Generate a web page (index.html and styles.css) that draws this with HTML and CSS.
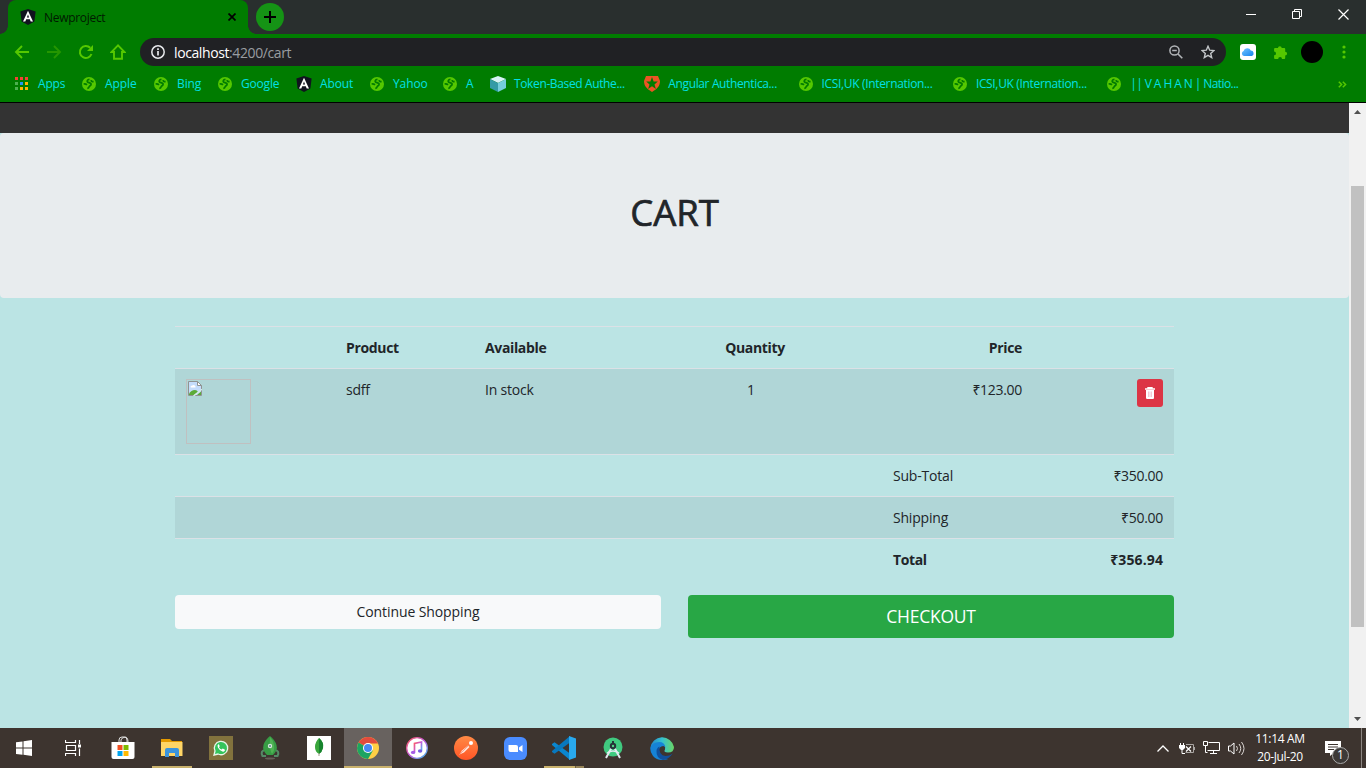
FILE: index.html
```html
<!DOCTYPE html>
<html lang="en">
<head>
<meta charset="utf-8">
<title>Newproject</title>
<link rel="stylesheet" href="styles.css">
</head>
<body>
<svg class="defs" width="0" height="0" aria-hidden="true">
  <defs>
    <symbol id="angular" viewBox="0 0 16 16"><path d="M8 0l7.6 2.6-1.2 10L8 16l-6.4-3.4-1.2-10z" fill="#11131f"/><path d="M8 1.800L3 12.600h2.300l.9-2.400h3.600l.9 2.400H13zM8 5.400l1.100 3H6.900z" fill="#fff" fill-rule="evenodd"/></symbol>
    <symbol id="globe" viewBox="0 0 14 14"><circle cx="7" cy="7" r="7" fill="#55c800"/><path d="M7.500 2.300C5 2.600 4.800 4.300 5.600 5c1 .8 2.900.6 3.500 1.900.4 1.300-1.200 1.700-1.800 2.500-.3.900-.9 1.700-2 2.100M1.600 7c1.400-.2 2.600 0 3.300 1M9.300 3c-.4 1.100.5 1.700 2.300 1.700" fill="none" stroke="#007c00" stroke-width="1.700"/></symbol>
  </defs>
</svg>
<div class="screen">
  <header class="titlebar">
    <div class="tab">
      <svg class="tab-icon" width="16" height="16"><use href="#angular"/></svg>
      <span class="tab-title">Newproject</span>
      <svg width="8" height="8" viewBox="0 0 8 8"><path d="M.5.5l7 7m0-7l-7 7" stroke="#000" stroke-width="1.700"/></svg>
    </div>
    <div class="new-tab"><svg width="12" height="12"><path d="M6 0v12M0 6h12" stroke="#000" stroke-width="2"/></svg></div>
    <div class="window-buttons">
      <svg width="10" height="10"><path d="M0 5.500h10" stroke="#fff"/></svg>
      <svg width="10" height="10"><path d="M.5 2.500h7v7h-7zM2.500 2.500v-2h7v7h-2" fill="none" stroke="#fff"/></svg>
      <svg width="11" height="11"><path d="M.5.500l10 10m0-10l-10 10" stroke="#fff" stroke-width="1.200"/></svg>
    </div>
  </header>

  <div class="toolbar">
    <nav class="nav-buttons">
      <svg width="16" height="16" viewBox="0 0 16 16"><path d="M15 8H2m6-6L2 8l6 6" fill="none" stroke="#55c800" stroke-width="1.900"/></svg>
      <svg width="16" height="16" viewBox="0 0 16 16"><path d="M1 8h13M8 2l6 6-6 6" fill="none" stroke="#259600" stroke-width="1.900"/></svg>
      <svg width="16" height="16" viewBox="0 0 16 16"><path d="M13.500 10A6 6 0 1 1 12.200 3.800" fill="none" stroke="#55c800" stroke-width="2"/><path d="M15 1v6H9z" fill="#55c800"/></svg>
      <svg width="16" height="16" viewBox="0 0 16 16"><path d="M8 1.400L1.500 8H4v6.800h8V8h2.500z" fill="none" stroke="#55c800" stroke-width="1.900"/></svg>
    </nav>
    <div class="address">
      <svg width="14" height="14" viewBox="0 0 14 14"><circle cx="7" cy="7" r="6.200" fill="none" stroke="#e8eaed" stroke-width="1.500"/><path d="M7 6v4.500M7 3.300v1.700" stroke="#e8eaed" stroke-width="1.700"/></svg>
      <span class="url"><b>localhost</b>:4200/cart</span>
      <svg class="lens" width="14" height="14" viewBox="0 0 14 14"><circle cx="5.500" cy="5.500" r="4.600" fill="none" stroke="#b2b5b8" stroke-width="1.500"/><path d="M3.200 5.500h4.600M9 9l4.300 4.300" stroke="#b2b5b8" stroke-width="1.600"/></svg>
      <svg width="14" height="14" viewBox="0 0 14 14"><path d="M7 1.300l1.700 3.900 4.200.4-3.200 2.800 1 4.200L7 10.400l-3.700 2.200 1-4.200L1.100 5.600l4.200-.4z" fill="none" stroke="#c3c6c9" stroke-width="1.400"/></svg>
    </div>
    <div class="extensions">
      <svg width="16" height="16" viewBox="0 0 16 16"><defs><linearGradient id="cloud" x2="1" y2="1"><stop stop-color="#72c5ff"/><stop offset="1" stop-color="#1683ee"/></linearGradient></defs><rect width="16" height="16" rx="3" fill="#fff"/><path d="M4 12A2.600 2.600 0 0 1 3.600 7a3.800 3.800 0 0 1 7.200-.5A2.900 2.900 0 0 1 12 12z" fill="url(#cloud)"/></svg>
      <svg width="15" height="15" viewBox="0 0 15 15"><path d="M2 3h3a1.800 1.800 0 0 1 3.700 0h2.600q.9 0 .9.900v2.800a1.900 1.900 0 0 1 0 3.800v2.600q0 .9-.9.900H9a1.900 1.900 0 0 0-3.800 0H2q-.9 0-.9-.9v-2.800a1.900 1.900 0 0 0 0-3.800V3.900Q1.100 3 2 3z" fill="#55c800"/></svg>
      <span class="avatar"></span>
      <svg width="4" height="14"><g fill="#55c800"><circle cx="2" cy="2" r="1.600"/><circle cx="2" cy="7" r="1.600"/><circle cx="2" cy="12" r="1.600"/></g></svg>
    </div>
  </div>

  <div class="bookmarks">
    <div class="mark w67"><svg class="fav" width="14" height="14" viewBox="0 0 14 14"><path d="M0 0h3v3H0zM5 0h3v3H5zM10 0h3v3h-3z" fill="#f44336"/><path d="M0 5h3v3H0zM0 10h3v3H0z" fill="#4caf50"/><path d="M5 5h3v3H5z" fill="#2196f3"/><path d="M10 5h3v3h-3zM5 10h3v3H5zM10 10h3v3h-3z" fill="#ffb300"/></svg><span class="l-apps">Apps</span></div>
    <div class="mark w72"><svg class="fav" width="14" height="14"><use href="#globe"/></svg><span>Apple</span></div>
    <div class="mark w64"><svg class="fav" width="14" height="14"><use href="#globe"/></svg><span class="l-bing">Bing</span></div>
    <div class="mark w79"><svg class="fav" width="14" height="14"><use href="#globe"/></svg><span class="l-google">Google</span></div>
    <div class="mark about"><svg class="fav wide" width="16" height="16"><use href="#angular"/></svg><span>About</span></div>
    <div class="mark w73"><svg class="fav" width="14" height="14"><use href="#globe"/></svg><span class="l-yahoo">Yahoo</span></div>
    <div class="mark w48"><svg class="fav" width="14" height="14"><use href="#globe"/></svg><span>A</span></div>
    <div class="mark w154"><svg class="fav wide" width="16" height="16" viewBox="0 0 16 16"><path d="M8 0l8 3-8 4-8-4z" fill="#d8f3f6"/><path d="M0 3l8 4v9l-8-4z" fill="#349ba6"/><path d="M16 3L8 7v9l8-4z" fill="#75cddb"/></svg><span class="l-token">Token-Based Authe...</span></div>
    <div class="mark w154"><svg class="fav wide" width="16" height="16" viewBox="0 0 16 16"><path d="M2 0h12l2 5c0 5-3 8-8 11C3 13 0 10 0 5z" fill="#eb5424"/><path d="M8 1l1.600 4.600h4.200l-3.300 2.800 1.400 4.500L8 10.200l-3.900 2.700 1.400-4.500-3.300-2.800h4.200z" fill="#007c00"/></svg><span class="l-auth">Angular Authentica...</span></div>
    <div class="mark w154"><svg class="fav" width="14" height="14"><use href="#globe"/></svg><span class="l-icsi">ICSI,UK (Internation...</span></div>
    <div class="mark w154"><svg class="fav" width="14" height="14"><use href="#globe"/></svg><span class="l-icsi">ICSI,UK (Internation...</span></div>
    <div class="mark w154"><svg class="fav" width="14" height="14"><use href="#globe"/></svg><span class="l-vahan">|| V A H A N | Natio...</span></div>
    <svg class="more" width="9" height="7"><path d="M.8.700l2.800 2.800L.8 6.300M4.800.700l2.800 2.800-2.800 2.800" fill="none" stroke="#55c800" stroke-width="1.500"/></svg>
  </div>

  <div class="viewport">
    <div class="page">
      <div class="site-bar"></div>
      <section class="hero"><h1>CART</h1></section>
      <main class="container">
        <table class="cart">
          <colgroup><col class="c-image"><col class="c-product"><col class="c-available"><col class="c-quantity"><col class="c-price"><col class="c-action"></colgroup>
          <thead><tr><th></th><th>Product</th><th>Available</th><th class="center">Quantity</th><th class="right">Price</th><th></th></tr></thead>
          <tbody>
            <tr class="striped item">
              <td><div class="thumb"><svg width="14" height="15" viewBox="0 0 14 15"><path d="M.5.500h9l4 4v10H.5z" fill="#c4dcfb" stroke="#8f9392"/><path d="M9.500.500v4h4z" fill="#fff" stroke="#8f9392"/><path d="M2.500 6q0-1.500 1.700-1.500 2-1.500 3 .7 1.300.8 0 1.300H3z" fill="#fff"/><path d="M1 14v-1Q3 9 7 9q2 0 3 2l-4 3z" fill="#5bab38"/><path d="M9 14l4-3.500V14z" fill="#5bab38"/><path d="M5.500 15L14 8.200" stroke="#d5eaea" stroke-width="1.400"/></svg></div></td>
              <td>sdff</td><td>In stock</td><td class="quantity">1</td><td class="right"><span class="amount">₹123.00</span></td>
              <td><button class="delete" aria-label="Remove"><svg width="10" height="12" viewBox="0 0 10 12"><path d="M3 1.500V.7h4v.8M0 2h10" fill="none" stroke="#fff" stroke-width="1.400"/><path d="M1 3h8v7.500Q9 12 8 12H2q-1 0-1-1.500z" fill="#fff"/><path d="M3.500 4.500v5.500M5 4.500v5.500M6.500 4.500v5.500" stroke="#efb1c3" stroke-width=".7"/></svg></button></td>
            </tr>
            <tr><td></td><td></td><td></td><td></td><td>Sub-Total</td><td class="right"><span class="amount">₹350.00</span></td></tr>
            <tr class="striped"><td></td><td></td><td></td><td></td><td>Shipping</td><td class="right"><span class="amount">₹50.00</span></td></tr>
            <tr class="total"><td></td><td></td><td></td><td></td><td>Total</td><td class="right"><span class="grand">₹356.94</span></td></tr>
          </tbody>
        </table>
        <div class="actions">
          <button class="continue">Continue Shopping</button>
          <button class="checkout">CHECKOUT</button>
        </div>
      </main>
    </div>
    <div class="scrollbar">
      <svg width="7" height="4"><path d="M0 4L3.500 0 7 4z" fill="#505050"/></svg>
      <div class="scroll-thumb"></div>
      <svg width="7" height="4"><path d="M0 0h7L3.500 4z" fill="#505050"/></svg>
    </div>
  </div>

  <footer class="taskbar">
    <div class="slot"><svg width="16" height="16"><path d="M0 2.300L6.500 1.400v6.200H0zM7.500 1.200L16 0v7.600H7.500zM0 8.500h6.500v6.300L0 13.900zM7.500 8.500H16V16l-8.500-1.200z" fill="#fff"/></svg></div>
    <div class="slot"><svg width="16" height="16"><path d="M.5 0v2.500h10V0M.5 16v-2.500h10V16M1.500 5.500h9v5h-9zM14.500 0v4M14.500 8.500V16" fill="none" stroke="#fff" stroke-width="1.200"/><path d="M13 4.500h3v3h-3z" fill="#fff"/></svg></div>
    <div class="slot"><svg width="24" height="24" viewBox="0 0 24 24"><path d="M8 7V4q0-3 3-3h2q3 0 3 3v3M10 6V4q0-2 4-3 3 0 3 5" fill="none" stroke="#ddd" stroke-width="1"/><path d="M.5 6h23v15q0 2-2 2h-19q-2 0-2-2z" fill="#fff"/><path d="M6.500 9h5v5h-5z" fill="#f25022"/><path d="M12.500 9h5v5h-5z" fill="#7fba00"/><path d="M6.500 15h5v5h-5z" fill="#00a4ef"/><path d="M12.500 15h5v5h-5z" fill="#ffb900"/></svg></div>
    <div class="slot open"><svg width="22" height="20" viewBox="0 0 22 20"><path d="M0 1h9l2 2h10v5H0z" fill="#e59a00"/><path d="M0 4h21.500v14H0z" fill="#ffd566"/><path d="M4 12q0-2 2-2h10q2 0 2 2v7h-4v-4H8v4H4z" fill="#3c94dc"/></svg></div>
    <div class="slot"><svg width="24" height="24" viewBox="0 0 24 24"><path d="M0 0h24v24H0z" fill="#82723d"/><path d="M5 19l1-4a6.700 6.700 0 1 1 3 3z" fill="#35c45c" stroke="#e8f6e9" stroke-width="1.300"/><path d="M9.400 8.200q-1.500 1-.5 3.300 1.500 3 4.500 4.100 2 .5 2.500-1l-.2-1-2-1-1 1q-2-.7-2.700-2.300l.7-1-.8-2z" fill="#fff"/></svg></div>
    <div class="slot"><svg width="20" height="24" viewBox="0 0 20 24"><ellipse cx="10" cy="22.500" rx="5" ry="1" fill="#665f59"/><path d="M5 14q-5 1-2.500 6H6M15 14q5 1 2.500 6H14" fill="none" stroke="#548966" stroke-width="2"/><path d="M10 0q5 4 6.500 9t-3.500 10H7Q2 14 3.500 9T10 0z" fill="#379c45"/><path d="M10 1q3 3 4 8t-2 9Q9 13 10 1z" fill="#4fb354"/><circle cx="10" cy="10" r="2.200" fill="#d6e6dc"/><circle cx="10" cy="10" r="1" fill="#58878f"/></svg></div>
    <div class="slot"><svg width="24" height="24"><path d="M0 0h24v24H0z" fill="#fff"/><path d="M12 2q5 4 4 10-1 4-4 6-4-2-4-7 0-5 4-9z" fill="#39a63c"/><path d="M12 2q5 4 4 10-1 4-4 6z" fill="#17842e"/><path d="M12 17v3" stroke="#9b9a85"/></svg></div>
    <div class="slot open active"><svg width="22" height="22" viewBox="0 0 22 22"><circle cx="11" cy="11" r="11" fill="#ffcf45"/><path d="M11 11L1.500 5.500A11 11 0 0 1 20.500 5.500L21 6.500H11z" fill="#e14b3e"/><path d="M1.500 5.500A11 11 0 0 0 11 22l4.800-8.200L11 11z" fill="#1da462"/><circle cx="11" cy="11" r="5" fill="#fff"/><circle cx="11" cy="11" r="4" fill="#4688f4"/></svg></div>
    <div class="slot"><svg width="22" height="22" viewBox="0 0 22 22"><defs><linearGradient id="music" x2="1" y2="1"><stop stop-color="#ff5b61"/><stop offset=".5" stop-color="#c55bdd"/><stop offset="1" stop-color="#3dc6f4"/></linearGradient></defs><circle cx="11" cy="11" r="10.300" fill="#fff" stroke="url(#music)" stroke-width="1.300"/><path d="M8.500 15V6.500L15.500 5v8.500" fill="none" stroke="url(#music)" stroke-width="1.700"/><ellipse cx="7.100" cy="15.400" rx="2.200" ry="1.700" fill="#a35ce5"/><ellipse cx="14.100" cy="14" rx="2.200" ry="1.700" fill="#745be1"/></svg></div>
    <div class="slot"><svg width="24" height="24" viewBox="0 0 24 24"><defs><linearGradient id="orange" x2="0" y2="1"><stop stop-color="#ff8a45"/><stop offset="1" stop-color="#ff5526"/></linearGradient></defs><circle cx="12" cy="12" r="12" fill="url(#orange)"/><path d="M5.500 18.500L8 14.500l6-5 1.500 1.500-5.500 5.500z" fill="#ffe5dc"/><path d="M5 19L16 8" stroke="#f38c6d" stroke-width=".7"/><circle cx="17" cy="6.900" r="2" fill="#fff"/></svg></div>
    <div class="slot"><svg width="23" height="23" viewBox="0 0 23 23"><rect width="23" height="23" rx="6" fill="#4a8cff"/><path d="M4.500 8H12q2 0 2 2v5H6.500q-2 0-2-2zM15 10.500L18.500 8v7L15 12.800z" fill="#fff"/></svg></div>
    <div class="slot open code"><svg width="24" height="24" viewBox="0 0 24 24"><path d="M0 8l2.500-1.800L18 17.500V24L0 9z" fill="#0a87d0"/><path d="M0 16l2.500 1.800L18 6.500V0L0 15z" fill="#0878be"/><path d="M17 0l7 2.500v19L17 24z" fill="#29a9ee"/></svg></div>
    <div class="slot"><svg width="20" height="22" viewBox="0 0 20 22"><circle cx="10" cy="10" r="9.500" fill="#40ca80"/><path d="M3 21L9 10h2l6 11" fill="none" stroke="#e1eaf0" stroke-width="2"/><path d="M4 16q6-4 12 0" fill="none" stroke="#e1eaf0" stroke-width="1.500"/><circle cx="10" cy="9" r="3.200" fill="#263238"/><circle cx="10" cy="9" r="1.200" fill="#54d38a"/><path d="M10 4v3" stroke="#263238" stroke-width="2"/></svg></div>
    <div class="slot"><svg width="24" height="24" viewBox="0 0 24 24"><defs><linearGradient id="edge"><stop stop-color="#2387ca"/><stop offset=".5" stop-color="#35c1d0"/><stop offset="1" stop-color="#6bd663"/></linearGradient></defs><path d="M.3 12A12 12 0 0 1 24 11q0 5.500-6 5.500-5 0-3-3 1-5-4-5-6-1-10.700 3.500z" fill="url(#edge)"/><path d="M.3 12q2-6 9-6 5 0 6 5l-2-1q-6 1-4 7 2 6 9 6Q8 26 3 20 0 16 .3 12z" fill="#1683d6"/><path d="M9.500 10.500q-1 9 6 9.500 4 0 7.200-2.500Q18 24 13 24 6 22 6.500 15q0-3 3-4.500z" fill="#10509c"/></svg></div>
    <div class="tray">
      <svg width="12" height="7"><path d="M.5 6.500L6 1l5.500 5.500" fill="none" stroke="#fff" stroke-width="1.300"/></svg>
      <svg width="16" height="11"><path d="M1.500 0v2M4.500 0v2" stroke="#fff"/><path d="M0 2h6v3L4 7H2L0 5z" fill="#fff"/><path d="M3 7v3.500h3" fill="none" stroke="#fff"/><path d="M7 1.500h7.500v8H6.500M15.500 4v3" fill="none" stroke="#aaa6a3"/><path d="M7 3.500l5 5m0-5l-5 5" stroke="#fff" stroke-width="1.200"/></svg>
      <svg width="17" height="14"><path d="M5.500 1.500h11v8h-12M7 12.500h7M10.500 9.500v3M.5.500h4v4h-4zM2.500 4.500v7h2" fill="none" stroke="#fff"/></svg>
      <svg width="17" height="15"><path d="M.5 5v5h2l3.500 3V2L2.500 5z" fill="none" stroke="#fff"/><path d="M8.500 5q2 2.500 0 5M11 3q3.500 4.500 0 9M13.500 1q5 6.500 0 13" fill="none" stroke="#ddd9d6"/></svg>
      <div class="clock"><span class="time">11:14 AM</span><span class="date">20-Jul-20</span></div>
      <div class="notice"><svg width="16" height="15"><path d="M0 0h16v12H8.500L5 15v-3H0z" fill="#fff"/><path d="M3 3.500h10M3 6h10M3 8.500h6" stroke="#3c332e"/></svg><span class="badge">1</span></div>
    </div>
  </footer>
</div>
</body>
</html>
```
FILE: styles.css
```css
* { box-sizing: border-box; }
body { margin: 0; overflow: hidden; font-family: "Open Sans", "Noto Sans", sans-serif; }
svg { display: block; flex: none; }
.defs { display: none; }
span { white-space: nowrap; }
.screen { width: 1366px; height: 768px; display: flex; flex-direction: column; overflow: hidden; }

.titlebar { height: 34px; background: #292f2e; display: flex; padding-left: 8px; }
.tab { position: relative; width: 240px; height: 34px; background: #007c00; border-radius: 8px 8px 0 0; display: flex; align-items: center; padding: 0 12px; color: #001a00; }
.tab::before, .tab::after { content: ""; position: absolute; bottom: 0; width: 8px; height: 8px; }
.tab::before { left: -8px; background: radial-gradient(circle at 0 0, #292f2e 7.500px, #007c00 8px); }
.tab::after { right: -8px; background: radial-gradient(circle at 100% 0, #292f2e 7.500px, #007c00 8px); }
.tab-title { margin-left: 8px; flex: 1; font-size: 12px; letter-spacing: -0.3px; }
.new-tab { width: 28px; height: 28px; margin: 3px 0 0 8px; border-radius: 50%; background: #159315; display: flex; align-items: center; justify-content: center; }
.window-buttons { display: flex; margin-left: auto; align-items: center; gap: 36px; padding: 0 17px 6px 0; }

.toolbar { height: 36px; background: #007c00; display: flex; align-items: center; padding-left: 14px; }
.nav-buttons { display: flex; gap: 16px; width: 126px; }
.address { width: 1086px; height: 28px; background: #202124; border-radius: 14px; display: flex; align-items: center; padding: 0 11px; }
.url { flex: 1; margin-left: 9px; font-size: 14px; color: #999da1; letter-spacing: -0.4px; }
.url b { font-weight: 400; color: #fff; }
.lens { margin-right: 18px; }
.extensions { display: flex; align-items: center; gap: 14px; margin-left: 14px; }
.extensions svg:nth-child(2) { margin-left: 3px; }
.avatar { width: 22px; height: 22px; margin-left: -1px; border-radius: 50%; background: #000; }
.extensions svg:last-child { margin-left: 5px; }

.bookmarks { height: 33px; background: #007c00; border-bottom: 1px solid #000; display: flex; align-items: center; padding: 0 19px 4px 15px; font-size: 12px; color: #00e1e6; }
.mark { display: flex; align-items: center; gap: 9px; flex: none; }
.mark span { position: relative; top: -1px; letter-spacing: -0.1px; }
.fav.wide { margin-right: -1px; }
.w67 { width: 67px; } .w72 { width: 72px; } .w64 { width: 64px; } .w79 { width: 78px; }
.about { width: 74px; }
.w73 { width: 73px; } .w48 { width: 47px; } .w154 { width: 154.300px; }
.mark .l-apps { letter-spacing: -0.2px; }
.mark .l-google { letter-spacing: -0.2px; }
.mark .l-token { letter-spacing: -0.37px; }
.mark .l-auth { letter-spacing: -0.37px; }
.mark .l-icsi { letter-spacing: -0.34px; }
.mark .l-vahan { letter-spacing: -0.58px; }
.more { margin-left: auto; }

.viewport { flex: 1; min-height: 0; display: flex; }
.page { width: 1349px; background: #bbe4e4; color: #212529; font-size: 14px; }
.site-bar { height: 30px; background: #333; }
.hero { height: 165px; background: #e8ecee; border-radius: 4px; display: flex; justify-content: center; }
h1 { margin: 57px 0 0; font-size: 36.500px; line-height: 44px; font-weight: 500; -webkit-text-stroke: 0.7px #212529; }
.container { width: 999px; margin: 28px auto 0; }
.cart { width: 999px; table-layout: fixed; border-collapse: separate; border-spacing: 0; }
.c-image { width: 160px; } .c-product { width: 139px; } .c-available { width: 154px; }
.c-quantity { width: 254px; } .c-price { width: 151px; } .c-action { width: 141px; }
.cart th, .cart td { height: 42px; border-top: 1px solid #dbe1e6; padding: 10px 11px 0; line-height: 22px; text-align: left; vertical-align: top; letter-spacing: -0.2px; }
.cart th { letter-spacing: -0.35px; }
.cart .item td { height: 86px; }
.striped { background: #b0d6d7; }
.cart .center { text-align: center; }
.cart .right { text-align: right; }
.cart .quantity { padding-left: 119px; }
.amount { letter-spacing: -0.3px; }
.grand { letter-spacing: 0.1px; }
.total { font-weight: 700; }
.cart .total td { letter-spacing: -0.4px; }
.cart .total .grand { letter-spacing: 0.1px; }
.thumb { width: 65px; height: 65px; border: 1px solid #c0c0c0; padding: 1px; }
.delete { width: 26px; height: 28px; margin-left: auto; border: 0; border-radius: 3px; background: #dc3545; display: flex; align-items: center; justify-content: center; padding: 0; }
.actions { display: grid; grid-template-columns: 486px 486px; gap: 27px; margin-top: 15px; align-items: start; }
.actions button { border: 0; border-radius: 4px; font-family: inherit; padding: 0 0 1px; }
.continue { height: 34px; background: #f8f9fa; color: #212529; font-size: 14px; letter-spacing: -0.1px; }
.actions .checkout { height: 43px; background: #28a745; color: #fff; font-size: 17.500px; letter-spacing: -0.25px; padding-bottom: 2px; }
.scrollbar { width: 17px; background: #f1f1f1; display: flex; flex-direction: column; align-items: center; padding: 7px 0 7px; }
.scroll-thumb { width: 13px; height: 441px; margin: 72px 0 auto; background: #c1c1c1; }

.taskbar { height: 40px; background: #3d342f; display: flex; gap: 1px; }
.slot { width: 48px; display: flex; align-items: center; justify-content: center; }
.slot:nth-child(3) { margin-left: 1px; }
.slot:nth-child(2) svg { margin-right: 1px; }
.slot.open { background: linear-gradient(#c9b16c, #c9b16c) center bottom / 40px 2px no-repeat; }
.slot.active { background-color: #68625f; background-size: 48px 2px; }
.slot.code { background-image: linear-gradient(90deg, #c9b16c 31px, #6b5f43 31px, #6b5f43 32px, #978459 32px); }
.tray { flex: 1; display: flex; align-items: center; padding-right: 18px; color: #fff; justify-content: flex-end; margin-right: 4px; border-right: 1px solid #8b8581; }
.tray > svg { margin-right: 10px; }
.tray > svg:nth-child(2), .tray > svg:nth-child(3) { margin-right: 8px; }
.clock { display: flex; flex-direction: column; align-items: center; font-size: 12px; line-height: 18px; width: 50px; padding-bottom: 1px; letter-spacing: -0.35px; }
.notice { position: relative; margin-left: 20px; width: 18px; height: 15px; }
.badge { position: absolute; left: 7px; top: 6px; width: 17px; height: 17px; border-radius: 50%; border: 1px solid #aaa; background: #3d3a38; font-size: 12px; line-height: 14px; text-align: center; }
```
